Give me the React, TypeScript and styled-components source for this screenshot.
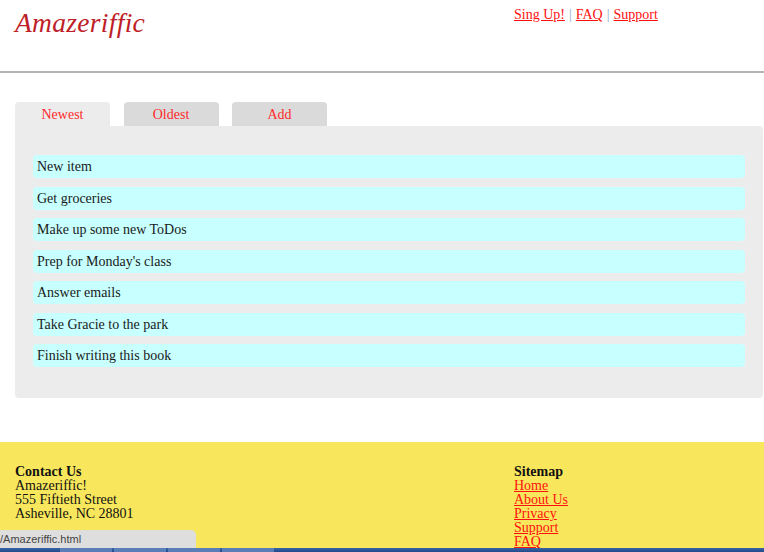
import React from "react";
import styled, { createGlobalStyle } from "styled-components";

const Global = createGlobalStyle`
  html, body { margin: 0; padding: 0; background: #fff; }
  body { font-family: "Liberation Serif", "Times New Roman", serif; font-size: 14px; color: #111; overflow: hidden; }
`;

const Header = styled.header`
  display: grid;
  grid-template-columns: 499px 1fr;
  height: 71px;
  padding-left: 15px;
  border-bottom: 2px solid #b4b4b4;
`;

const Title = styled.h1`
  margin: 8px 0 0;
  font-size: 27.5px;
  line-height: 30px;
  font-style: italic;
  font-weight: normal;
  color: #be1e28;
  letter-spacing: 0.3px;
`;

const TopNav = styled.nav`
  margin-top: 6px;
  font-size: 14px;
  line-height: 18px;
`;

const Link = styled.a`
  color: #ff1010;
  text-decoration: underline;
`;

const Sep = styled.span`
  color: #8aaec8;
  margin: 0 4px;
`;

const Main = styled.main`
  padding: 29px 1px 0 15px;
`;

const Tabs = styled.div`
  display: flex;
  gap: 13.5px;
`;

const Tab = styled.div<{ $active?: boolean }>`
  width: 95px;
  height: 24px;
  line-height: 25px;
  text-align: center;
  border-radius: 4px 4px 0 0;
  background: ${(p) => (p.$active ? "#ececec" : "#dadada")};
  color: #ff2a2a;
  font-size: 14px;
`;

const Panel = styled.section`
  background: #ececec;
  border-radius: 0 4px 4px 4px;
  padding: 29px 18px 31px;
  display: flex;
  flex-direction: column;
  gap: 8.5px;
`;

const Item = styled.div`
  height: 23px;
  line-height: 24px;
  padding-left: 4px;
  border-radius: 4px;
  background: #c8ffff;
  font-size: 14px;
  color: #1a1a1a;
`;

const Footer = styled.footer`
  margin-top: 44px;
  background: #f8e75c;
  display: grid;
  grid-template-columns: 499px 1fr;
  padding: 23px 0 20px 15px;
  font-size: 14px;
  line-height: 14px;
`;

const Col = styled.div`
  display: flex;
  flex-direction: column;
`;

const Heading = styled.strong`
  font-weight: bold;
`;

const StatusBar = styled.div`
  position: fixed;
  left: 0;
  bottom: 4px;
  width: 196px;
  height: 18px;
  background: #dedede;
  border-radius: 0 5px 0 0;
  font-family: "Liberation Sans", Arial, sans-serif;
  font-size: 11px;
  line-height: 19px;
  color: #444;
  white-space: nowrap;
  overflow: hidden;
`;

const Taskbar = styled.div`
  position: fixed;
  left: 0;
  right: 0;
  bottom: 0;
  height: 4px;
  background: linear-gradient(#3a64a6, #1f4a8c);
  display: flex;
  gap: 2px;
  padding-left: 60px;
`;

const TaskButton = styled.div`
  width: 52px;
  height: 4px;
  background: #5a7fb8;
`;

const items = [
  "New item",
  "Get groceries",
  "Make up some new ToDos",
  "Prep for Monday's class",
  "Answer emails",
  "Take Gracie to the park",
  "Finish writing this book",
];

export default function App() {
  return (
    <>
      <Global />
      <Header>
        <Title>Amazeriffic</Title>
        <TopNav>
          <Link href="#">Sing Up!</Link>
          <Sep>|</Sep>
          <Link href="#">FAQ</Link>
          <Sep>|</Sep>
          <Link href="#">Support</Link>
        </TopNav>
      </Header>
      <Main>
        <Tabs>
          <Tab $active>Newest</Tab>
          <Tab>Oldest</Tab>
          <Tab>Add</Tab>
        </Tabs>
        <Panel>
          {items.map((t) => (
            <Item key={t}>{t}</Item>
          ))}
        </Panel>
      </Main>
      <Footer>
        <Col>
          <Heading>Contact Us</Heading>
          <span>Amazeriffic!</span>
          <span>555 Fiftieth Street</span>
          <span>Asheville, NC 28801</span>
        </Col>
        <Col>
          <Heading>Sitemap</Heading>
          <Link href="#">Home</Link>
          <Link href="#">About Us</Link>
          <Link href="#">Privacy</Link>
          <Link href="#">Support</Link>
          <Link href="#">FAQ</Link>
        </Col>
      </Footer>
      <StatusBar>/Amazeriffic.html</StatusBar>
      <Taskbar>
        <TaskButton />
        <TaskButton />
        <TaskButton />
        <TaskButton />
      </Taskbar>
    </>
  );
}
